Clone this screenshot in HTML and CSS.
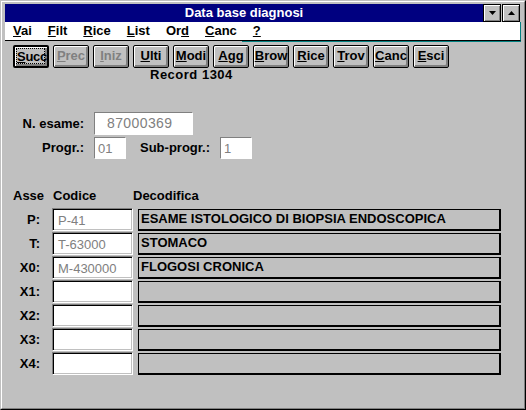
FILE: index.html
```html
<!DOCTYPE html>
<html>
<head>
<meta charset="utf-8">
<link rel="stylesheet" href="styles.css">
</head>
<body>
<div class="frame">
  <div class="win">
    <div class="titlebar">
      <div class="caption">Data base diagnosi</div>
      <div class="capbtn"><svg width="7" height="4" viewBox="0 0 7 4"><polygon points="0,0 7,0 3.5,4" fill="#000"/></svg></div>
      <div class="capbtn capbtn-last"><svg width="7" height="4" viewBox="0 0 7 4"><polygon points="0,4 7,4 3.5,0" fill="#000"/></svg></div>
    </div>
    <div class="menubar">
      <span><u>V</u>ai</span>
      <span><u>F</u>ilt</span>
      <span><u>R</u>ice</span>
      <span><u>L</u>ist</span>
      <span>Or<u>d</u></span>
      <span><u>C</u>anc</span>
      <span><u>?</u></span>
    </div>
    <div class="menutrail"></div>
    <div class="client">
      <div class="toolbar">
        <div class="btn btn-default"><span class="focus"><u>S</u>ucc</span></div>
        <div class="btn btn-disabled"><u>P</u>rec</div>
        <div class="btn btn-disabled"><u>I</u>niz</div>
        <div class="btn"><u>U</u>lti</div>
        <div class="btn"><u>M</u>odi</div>
        <div class="btn"><u>A</u>gg</div>
        <div class="btn"><u>B</u>row</div>
        <div class="btn"><u>R</u>ice</div>
        <div class="btn"><u>T</u>rov</div>
        <div class="btn"><u>C</u>anc</div>
        <div class="btn"><u>E</u>sci</div>
      </div>
      <div class="record">Record 1304</div>

      <div class="frow r-esame">
        <div class="lbl lbl-a">N. esame:</div>
        <div class="edit edit-ro e-esame">87000369</div>
      </div>
      <div class="frow r-progr">
        <div class="lbl lbl-a">Progr.:</div>
        <div class="edit edit-ro e-small">01</div>
        <div class="lbl lbl-sub">Sub-progr.:</div>
        <div class="edit edit-ro e-small">1</div>
      </div>

      <div class="thead">
        <div class="th th-asse">Asse</div>
        <div class="th th-cod">Codice</div>
        <div class="th">Decodifica</div>
      </div>

      <div class="trows">
        <div class="trow">
          <div class="lbl rlbl">P:</div>
          <div class="edit cod">P-41</div>
          <div class="dec">ESAME ISTOLOGICO DI BIOPSIA ENDOSCOPICA</div>
        </div>
        <div class="trow">
          <div class="lbl rlbl">T:</div>
          <div class="edit cod">T-63000</div>
          <div class="dec">STOMACO</div>
        </div>
        <div class="trow">
          <div class="lbl rlbl">X0:</div>
          <div class="edit cod">M-430000</div>
          <div class="dec">FLOGOSI CRONICA</div>
        </div>
        <div class="trow">
          <div class="lbl rlbl">X1:</div>
          <div class="edit cod"></div>
          <div class="dec"></div>
        </div>
        <div class="trow">
          <div class="lbl rlbl">X2:</div>
          <div class="edit cod"></div>
          <div class="dec"></div>
        </div>
        <div class="trow">
          <div class="lbl rlbl">X3:</div>
          <div class="edit cod"></div>
          <div class="dec"></div>
        </div>
        <div class="trow">
          <div class="lbl rlbl">X4:</div>
          <div class="edit cod"></div>
          <div class="dec"></div>
        </div>
      </div>
    </div>
  </div>
</div>
</body>
</html>
```

FILE: styles.css
```css
* { box-sizing: border-box; }

body {
  margin: 0;
  background: #c0c0c0;
  font-family: "Liberation Sans", Arial, sans-serif;
  font-size: 13px;
  color: #000;
}

u { text-decoration: underline; text-underline-offset: 1px; }

.frame {
  width: 526px;
  height: 410px;
  background: #c0c0c0;
  border: 1px solid;
  border-color: #c0c0c0 #000 #000 #c0c0c0;
}

.win {
  height: 100%;
  border: 1px solid;
  border-color: #fff #808080 #808080 #fff;
  padding: 2px 3px 0 3px;
}

.titlebar {
  display: flex;
  height: 18px;
}

.caption {
  flex: 1;
  background: #000080;
  color: #fff;
  font-weight: bold;
  font-size: 13px;
  line-height: 18px;
  text-align: center;
}

.capbtn {
  width: 18px;
  height: 18px;
  border: 1px solid #000;
  background: #c0c0c0;
  box-shadow: inset 1px 1px 0 #fff, inset -1px -1px 0 #808080;
  display: flex;
  align-items: center;
  justify-content: center;
}

.capbtn-last {
  margin-left: 1px;
  margin-right: 1px;
}

.menubar {
  display: flex;
  gap: 16px;
  height: 19px;
  padding-left: 8px;
  background: #fff;
  border-bottom: 1px solid #000;
  border-right: 1px solid #008080;
  font-weight: bold;
  font-size: 13px;
  line-height: 18px;
}

.menutrail {
  height: 1px;
  margin-left: 237px;
  background: #008080;
}

.client {
  padding-top: 3px;
}

.toolbar {
  display: flex;
  gap: 4px;
  padding-left: 8px;
}

.btn {
  width: 36px;
  height: 23px;
  border: 1px solid #000;
  border-radius: 2px;
  background: #c0c0c0;
  box-shadow: inset 1px 1px 0 #fff, inset -2px -2px 0 #808080;
  font-weight: bold;
  font-size: 13px;
  line-height: 20px;
  text-align: center;
  white-space: nowrap;
  overflow: hidden;
}

.btn-default {
  border-width: 2px;
  padding: 1px 2px 2px 1px;
  line-height: 16px;
}

.btn-default .focus {
  display: block;
  height: 100%;
  border: 1px dotted #000;
  letter-spacing: -0.3px;
}

.btn-disabled {
  color: #808080;
}

.record {
  height: 14px;
  padding-left: 145px;
  font-weight: bold;
  font-size: 13px;
  line-height: 14px;
  letter-spacing: 0.5px;
}

.frow {
  display: flex;
  align-items: center;
}

.r-esame {
  margin-top: 30px;
  height: 23px;
}

.r-progr {
  margin-top: 1px;
  height: 23px;
}

.lbl {
  font-weight: bold;
  font-size: 13px;
  white-space: nowrap;
}

.lbl-a {
  width: 79px;
  margin-right: 10px;
  text-align: right;
}

.lbl-sub {
  margin-left: 14px;
  margin-right: 10px;
}

.edit {
  height: 23px;
  background: #fff;
  border: 1px solid;
  border-color: #808080 #fff #fff #808080;
  box-shadow: inset 1px 1px 0 #000, inset -1px -1px 0 #c0c0c0;
  color: #808080;
  font-size: 13px;
  line-height: 21px;
  padding-left: 4px;
  white-space: nowrap;
  overflow: hidden;
}

.edit-ro {
  box-shadow: none;
}

.e-esame {
  width: 99px;
  padding-left: 12px;
  font-size: 14px;
  letter-spacing: 0.4px;
}

.e-small {
  width: 32px;
  padding-left: 3px;
  height: 22px;
  line-height: 22px;
}

.thead {
  display: flex;
  margin-top: 30px;
  padding-left: 8px;
  height: 14px;
  line-height: 14px;
  font-weight: bold;
}

.th-asse { width: 40px; }
.th-cod { width: 80px; }

.trows {
  margin-top: 5px;
  display: flex;
  flex-direction: column;
  gap: 1px;
}

.trow {
  display: flex;
  height: 23px;
}

.rlbl {
  width: 35px;
  text-align: right;
  line-height: 23px;
}

.cod {
  width: 81px;
  margin-left: 12px;
  padding-left: 5px;
  line-height: 23px;
}

.dec {
  width: 363px;
  height: 22px;
  margin-left: 5px;
  margin-top: 1px;
  border: 1px solid #000;
  box-shadow: inset -1px -1px 0 #000;
  padding: 1px 2px;
  font-weight: bold;
  font-size: 13px;
  line-height: 15px;
  white-space: nowrap;
  overflow: hidden;
}
```
